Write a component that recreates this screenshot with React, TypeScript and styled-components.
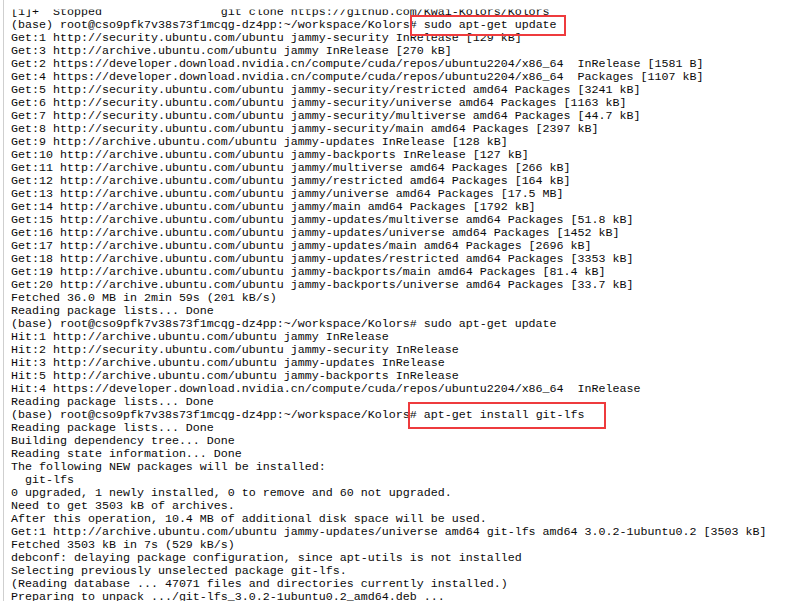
import React from "react";
import styled, { createGlobalStyle } from "styled-components";

const Global = createGlobalStyle`
  html, body { margin: 0; padding: 0; background: #ffffff; }
  body { overflow: hidden; }
`;

const Screen = styled.div`
  width: 812px;
  height: 601px;
  overflow: hidden;
  background: #ffffff;
  display: flex;
`;

const Terminal = styled.pre`
  margin: 0 0 0 3px;
  padding: 5.5px 0 0 7px;
  border-left: 1px solid #cfcfcf;
  flex: 1;
  font-family: "Liberation Mono", "DejaVu Sans Mono", monospace;
  font-size: 11.67px;
  line-height: 13px;
  color: #0a0a0a;
  white-space: pre;
`;

const Line = styled.div<{ $cut?: boolean }>`
  height: 13px;
  ${(p) => (p.$cut ? "clip-path: inset(4px 0 0 0);" : "")}
`;

const Marked = styled.span<{ $l: number; $r: number; $t: number; $b: number }>`
  position: relative;
  &::after {
    content: "";
    position: absolute;
    left: ${(p) => p.$l}px;
    right: ${(p) => p.$r}px;
    top: ${(p) => p.$t}px;
    bottom: ${(p) => p.$b}px;
    border: 2px solid #ee3b3d;
    pointer-events: none;
  }
`;

const prompt = "(base) root@cso9pfk7v38s73f1mcqg-dz4pp:~/workspace/Kolors";

const before: string[] = [
  "Get:1 http://security.ubuntu.com/ubuntu jammy-security InRelease [129 kB]",
  "Get:3 http://archive.ubuntu.com/ubuntu jammy InRelease [270 kB]",
  "Get:2 https://developer.download.nvidia.cn/compute/cuda/repos/ubuntu2204/x86_64  InRelease [1581 B]",
  "Get:4 https://developer.download.nvidia.cn/compute/cuda/repos/ubuntu2204/x86_64  Packages [1107 kB]",
  "Get:5 http://security.ubuntu.com/ubuntu jammy-security/restricted amd64 Packages [3241 kB]",
  "Get:6 http://security.ubuntu.com/ubuntu jammy-security/universe amd64 Packages [1163 kB]",
  "Get:7 http://security.ubuntu.com/ubuntu jammy-security/multiverse amd64 Packages [44.7 kB]",
  "Get:8 http://security.ubuntu.com/ubuntu jammy-security/main amd64 Packages [2397 kB]",
  "Get:9 http://archive.ubuntu.com/ubuntu jammy-updates InRelease [128 kB]",
  "Get:10 http://archive.ubuntu.com/ubuntu jammy-backports InRelease [127 kB]",
  "Get:11 http://archive.ubuntu.com/ubuntu jammy/multiverse amd64 Packages [266 kB]",
  "Get:12 http://archive.ubuntu.com/ubuntu jammy/restricted amd64 Packages [164 kB]",
  "Get:13 http://archive.ubuntu.com/ubuntu jammy/universe amd64 Packages [17.5 MB]",
  "Get:14 http://archive.ubuntu.com/ubuntu jammy/main amd64 Packages [1792 kB]",
  "Get:15 http://archive.ubuntu.com/ubuntu jammy-updates/multiverse amd64 Packages [51.8 kB]",
  "Get:16 http://archive.ubuntu.com/ubuntu jammy-updates/universe amd64 Packages [1452 kB]",
  "Get:17 http://archive.ubuntu.com/ubuntu jammy-updates/main amd64 Packages [2696 kB]",
  "Get:18 http://archive.ubuntu.com/ubuntu jammy-updates/restricted amd64 Packages [3353 kB]",
  "Get:19 http://archive.ubuntu.com/ubuntu jammy-backports/main amd64 Packages [81.4 kB]",
  "Get:20 http://archive.ubuntu.com/ubuntu jammy-backports/universe amd64 Packages [33.7 kB]",
  "Fetched 36.0 MB in 2min 59s (201 kB/s)",
  "Reading package lists... Done",
];

const middle: string[] = [
  "Hit:1 http://archive.ubuntu.com/ubuntu jammy InRelease",
  "Hit:2 http://security.ubuntu.com/ubuntu jammy-security InRelease",
  "Hit:3 http://archive.ubuntu.com/ubuntu jammy-updates InRelease",
  "Hit:5 http://archive.ubuntu.com/ubuntu jammy-backports InRelease",
  "Hit:4 https://developer.download.nvidia.cn/compute/cuda/repos/ubuntu2204/x86_64  InRelease",
  "Reading package lists... Done",
];

const after: string[] = [
  "Reading package lists... Done",
  "Building dependency tree... Done",
  "Reading state information... Done",
  "The following NEW packages will be installed:",
  "  git-lfs",
  "0 upgraded, 1 newly installed, 0 to remove and 60 not upgraded.",
  "Need to get 3503 kB of archives.",
  "After this operation, 10.4 MB of additional disk space will be used.",
  "Get:1 http://archive.ubuntu.com/ubuntu jammy-updates/universe amd64 git-lfs amd64 3.0.2-1ubuntu0.2 [3503 kB]",
  "Fetched 3503 kB in 7s (529 kB/s)",
  "debconf: delaying package configuration, since apt-utils is not installed",
  "Selecting previously unselected package git-lfs.",
  "(Reading database ... 47071 files and directories currently installed.)",
  "Preparing to unpack .../git-lfs_3.0.2-1ubuntu0.2_amd64.deb ...",
];

export default function App() {
  return (
    <>
      <Global />
      <Screen>
        <Terminal>
          <Line $cut>{"[1]+  Stopped                 git clone https://github.com/Kwai-Kolors/Kolors"}</Line>
          <Line>
            {prompt}
            <Marked $l={0} $r={-9} $t={-3} $b={-4}>{"# sudo apt-get update"}</Marked>
          </Line>
          {before.map((t, i) => (
            <Line key={"b" + i}>{t}</Line>
          ))}
          <Line>{prompt + "# sudo apt-get update"}</Line>
          {middle.map((t, i) => (
            <Line key={"m" + i}>{t}</Line>
          ))}
          <Line>
            {prompt}
            <Marked $l={-2} $r={-21} $t={-6} $b={-7}>{"# apt-get install git-lfs"}</Marked>
          </Line>
          {after.map((t, i) => (
            <Line key={"a" + i}>{t}</Line>
          ))}
        </Terminal>
      </Screen>
    </>
  );
}
